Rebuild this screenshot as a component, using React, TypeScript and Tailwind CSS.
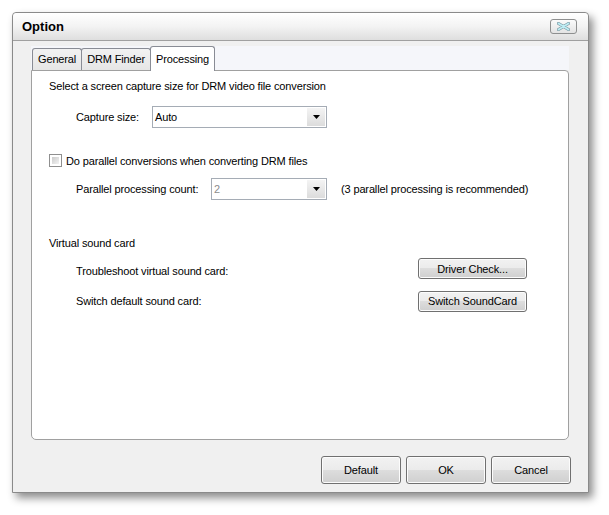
import React from "react";

const font = { fontFamily: '"Liberation Sans", Arial, sans-serif' };

const btn =
  "flex items-center justify-center rounded-[3px] border border-[#707070] bg-[linear-gradient(to_bottom,#f2f2f2_0%,#ebebeb_50%,#dddddd_50%,#cfcfcf_100%)] text-[11px] text-black shadow-[inset_0_0_0_1px_#fcfcfc]";

const Arrow = () => (
  <svg width="7" height="4" viewBox="0 0 7 4">
    <path d="M0 0h7L3.5 4z" fill="#000" />
  </svg>
);

interface ComboProps {
  value: string;
  width: string;
  disabled?: boolean;
}

const Combo: React.FC<ComboProps> = ({ value, width, disabled }) => (
  <div
    className={`flex h-[22px] items-center border border-[#a5acb5] bg-white ${width}`}
  >
    <span
      className={`flex-1 pl-[2px] text-[11px] ${disabled ? "text-[#8d8d8d]" : "text-black"}`}
    >
      {value}
    </span>
    <div className="mr-px flex h-[18px] w-[18px] items-center justify-center bg-[linear-gradient(to_bottom,#f4f4f4,#dcdcdc)]">
      <Arrow />
    </div>
  </div>
);

const Tab: React.FC<{ label: string; active?: boolean }> = ({ label, active }) =>
  active ? (
    <div className="relative z-10 -mb-px flex h-[25px] items-center rounded-t-[3px] border border-b-0 border-[#898c95] bg-white px-[5px] text-[11px]">
      {label}
    </div>
  ) : (
    <div className="mt-[2px] -mr-px flex h-[22px] items-center rounded-t-[3px] border border-b-0 border-[#898c95] bg-[linear-gradient(to_bottom,#f2f2f2,#e6e6e6)] px-[5px] text-[11px]">
      {label}
    </div>
  );

export default function App() {
  return (
    <div
      className="min-h-[515px] w-[609px] bg-white pl-[12px] pt-[12px] tracking-[-0.14px]"
      style={font}
    >
      <div className="flex h-[481px] w-[577px] flex-col rounded-t-[4px] border border-[#8a8a8a] bg-[#f0f0f0] shadow-[4px_5px_8px_rgba(0,0,0,0.45)]">
        {/* title bar */}
        <div className="flex h-[28px] items-center justify-between rounded-t-[4px] border-b border-[#a0a0a0] bg-[linear-gradient(to_bottom,#ffffff,#f3f3f3_50%,#dedede)] pl-[9px] pr-[11px]">
          <span className="text-[13px] font-bold tracking-normal text-black">Option</span>
          <div className="flex h-[15px] w-[27px] items-center justify-center rounded-[3px] border border-[#8e8f8f] bg-[linear-gradient(to_bottom,#fbfbfb,#e3e3e3)]">
            <svg width="13" height="9" viewBox="0 0 13 9">
              <path
                d="M1.5 1.5l10 6M11.5 1.5l-10 6"
                stroke="#7a9aa4"
                strokeWidth="3.2"
                strokeLinecap="round"
              />
              <path
                d="M1.5 1.5l10 6M11.5 1.5l-10 6"
                stroke="#bfeef5"
                strokeWidth="1.8"
                strokeLinecap="round"
              />
            </svg>
          </div>
        </div>

        {/* body */}
        <div className="flex flex-1 flex-col pl-[18px] pr-[19px] pt-[5px]">
          <div className="flex h-[24px] items-end bg-[#f5f6fa] pl-px">
            <Tab label="General" />
            <Tab label="DRM Finder" />
            <Tab label="Processing" active />
          </div>

          <div className="flex h-[370px] flex-col rounded-b-[5px] rounded-tr-[4px] border border-[#a0a0a0] bg-white pl-[17px] pt-[8px] text-[11px] text-black">
            <div className="h-[14px] leading-[14px]">
              Select a screen capture size for DRM video file conversion
            </div>

            <div className="mt-[13px] flex items-center pl-[27px]">
              <span className="w-[76px]">Capture size:</span>
              <Combo value="Auto" width="w-[175px]" />
            </div>

            <div className="mt-[26px] flex h-[13px] items-center">
              <div className="h-[13px] w-[13px] border border-[#8f8f8f] bg-white p-[2px]">
                <div className="h-full w-full bg-[linear-gradient(135deg,#cbcbcb,#f3f3f3)]" />
              </div>
              <span className="ml-[4px] mt-px">Do parallel conversions when converting DRM files</span>
            </div>

            <div className="mt-[11px] flex items-center pl-[27px]">
              <span className="w-[135px]">Parallel processing count:</span>
              <Combo value="2" width="w-[116px]" disabled />
              <span className="ml-[14px]">(3 parallel processing is recommended)</span>
            </div>

            <div className="mt-[36px] h-[14px] leading-[14px]">Virtual sound card</div>

            <div className="mt-[8px] flex items-center justify-between pl-[27px] pr-[41px]">
              <span className="mt-[5px]">Troubleshoot virtual sound card:</span>
              <div className={`${btn} h-[21px] w-[109px]`}>Driver Check...</div>
            </div>

            <div className="mt-[11px] flex items-center justify-between pl-[27px] pr-[41px]">
              <span>Switch default sound card:</span>
              <div className={`${btn} h-[21px] w-[109px]`}>Switch SoundCard</div>
            </div>
          </div>

          <div className="-mr-[2px] mt-[16px] flex justify-end gap-[5px]">
            <div className={`${btn} h-[28px] w-[80px]`}>Default</div>
            <div className={`${btn} h-[28px] w-[80px]`}>OK</div>
            <div className={`${btn} h-[28px] w-[80px]`}>Cancel</div>
          </div>
        </div>
      </div>
    </div>
  );
}
